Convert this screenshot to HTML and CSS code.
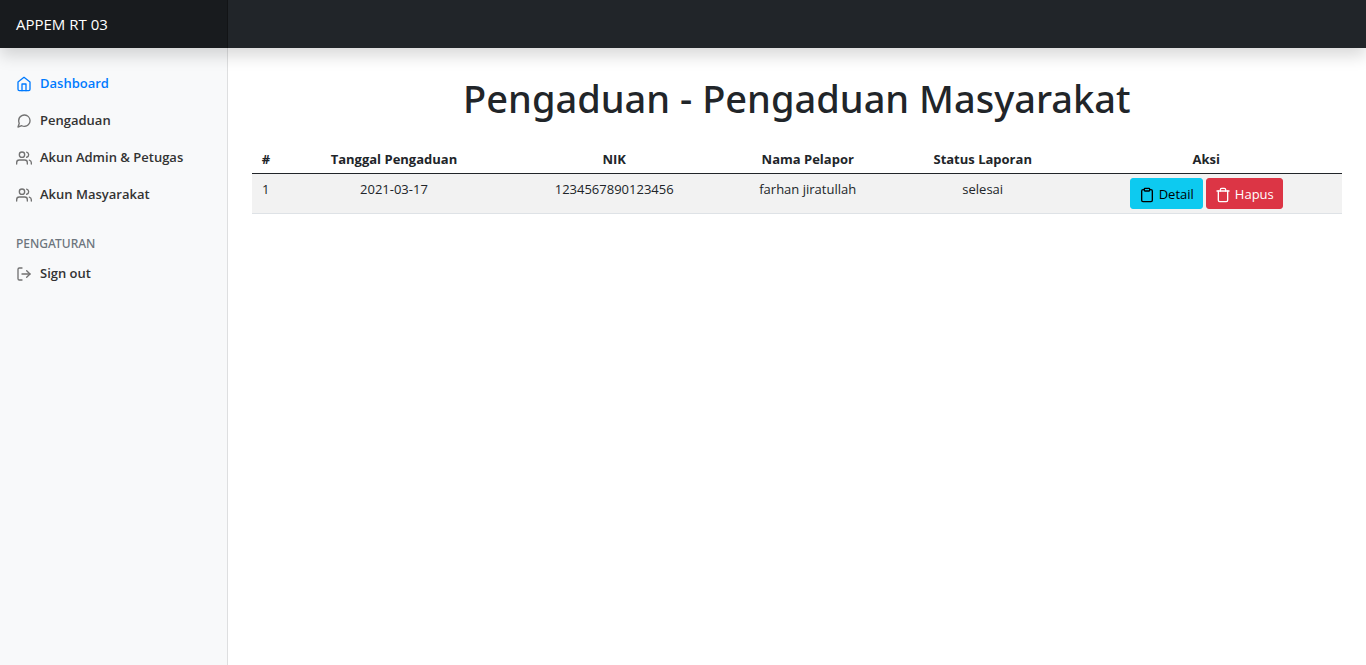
FILE: index.html
```html
<!DOCTYPE html>
<html lang="id">
<head>
<meta charset="utf-8">
<meta name="viewport" content="width=device-width, initial-scale=1">
<title>APPEM RT 03</title>
<link rel="stylesheet" href="styles.css">
</head>
<body>
<svg class="sprite" aria-hidden="true">
  <symbol id="home" viewBox="0 0 24 24"><path d="M3 9l9-7 9 7v11a2 2 0 0 1-2 2H5a2 2 0 0 1-2-2z"/><path d="M9 22V12h6v10"/></symbol>
  <symbol id="message" viewBox="0 0 24 24"><path d="M21 11.5a8.38 8.38 0 0 1-.9 3.8 8.5 8.5 0 0 1-7.6 4.7 8.38 8.38 0 0 1-3.8-.9L3 21l1.9-5.7a8.38 8.38 0 0 1-.9-3.8 8.5 8.5 0 0 1 4.7-7.6 8.38 8.38 0 0 1 3.8-.9h.5a8.48 8.48 0 0 1 8 8v.5z"/></symbol>
  <symbol id="users" viewBox="0 0 24 24"><path d="M17 21v-2a4 4 0 0 0-4-4H5a4 4 0 0 0-4 4v2"/><circle cx="9" cy="7" r="4"/><path d="M23 21v-2a4 4 0 0 0-3-3.87"/><path d="M16 3.13a4 4 0 0 1 0 7.75"/></symbol>
  <symbol id="logout" viewBox="0 0 24 24"><path d="M9 21H5a2 2 0 0 1-2-2V5a2 2 0 0 1 2-2h4"/><path d="M16 17l5-5-5-5"/><path d="M21 12H9"/></symbol>
  <symbol id="clipboard" viewBox="0 0 24 24"><path d="M16 4h2a2 2 0 0 1 2 2v14a2 2 0 0 1-2 2H6a2 2 0 0 1-2-2V6a2 2 0 0 1 2-2h2"/><rect x="8" y="2" width="8" height="4" rx="1" ry="1"/></symbol>
  <symbol id="trash" viewBox="0 0 24 24"><path d="M3 6h18"/><path d="M19 6v14a2 2 0 0 1-2 2H7a2 2 0 0 1-2-2V6m3 0V4a2 2 0 0 1 2-2h4a2 2 0 0 1 2 2v2"/></symbol>
</svg>
<header class="navbar">
  <a class="brand" href="#">APPEM RT 03</a>
</header>
<div class="layout">
  <nav class="sidebar">
    <ul class="nav">
      <li><a class="nav-link active" href="#"><svg class="icon"><use href="#home"/></svg>Dashboard</a></li>
      <li><a class="nav-link" href="#"><svg class="icon"><use href="#message"/></svg>Pengaduan</a></li>
      <li><a class="nav-link" href="#"><svg class="icon"><use href="#users"/></svg>Akun Admin &amp; Petugas</a></li>
      <li><a class="nav-link" href="#"><svg class="icon"><use href="#users"/></svg>Akun Masyarakat</a></li>
    </ul>
    <h6 class="nav-heading">Pengaturan</h6>
    <ul class="nav">
      <li><a class="nav-link" href="#"><svg class="icon"><use href="#logout"/></svg>Sign out</a></li>
    </ul>
  </nav>
  <main class="main">
    <h1 class="title">Pengaduan - Pengaduan Masyarakat</h1>
    <table class="table">
      <colgroup>
        <col class="col-no"><col class="col-date"><col class="col-nik"><col class="col-name"><col class="col-status"><col class="col-action">
      </colgroup>
      <thead>
        <tr><th scope="col">#</th><th scope="col">Tanggal Pengaduan</th><th scope="col">NIK</th><th scope="col">Nama Pelapor</th><th scope="col">Status Laporan</th><th scope="col">Aksi</th></tr>
      </thead>
      <tbody>
        <tr>
          <td>1</td><td>2021-03-17</td><td>1234567890123456</td><td>farhan jiratullah</td><td>selesai</td>
          <td class="action-cell"><div class="actions"><a class="btn btn-info" href="#"><svg class="icon"><use href="#clipboard"/></svg>Detail</a><a class="btn btn-danger" href="#"><svg class="icon"><use href="#trash"/></svg>Hapus</a></div></td>
        </tr>
      </tbody>
    </table>
  </main>
</div>
</body>
</html>
```
FILE: styles.css
```css
* { box-sizing: border-box; }

body {
  margin: 0;
  min-height: 100vh;
  display: flex;
  flex-direction: column;
  background: #fff;
  color: #212529;
  font: 400 13px/21px "Open Sans", "Noto Sans", sans-serif;
}

a { text-decoration: none; }
.sprite { display: none; }

.icon {
  width: 16px;
  height: 16px;
  flex: none;
  fill: none;
  stroke: currentColor;
  stroke-width: 2;
  stroke-linecap: round;
  stroke-linejoin: round;
}

.navbar {
  position: sticky;
  top: 0;
  z-index: 1;
  display: flex;
  background: #212529;
  box-shadow: 0 8px 16px rgba(0, 0, 0, .15);
}

.brand {
  width: 16.6667%;
  padding: 12px 16px;
  color: #fff;
  font-size: 15px;
  line-height: 24px;
  background: rgba(0, 0, 0, .25);
  box-shadow: inset -1px 0 0 rgba(0, 0, 0, .25);
}

.layout { flex: 1; display: flex; }

.sidebar {
  width: 16.6667%;
  flex: none;
  padding-top: 17px;
  background: #f8f9fa;
  box-shadow: inset -1px 0 0 rgba(0, 0, 0, .1);
}

.nav { list-style: none; margin: 0; padding: 0; }

.nav-link {
  display: flex;
  align-items: center;
  gap: 8px;
  padding: 8px 16px;
  color: #333;
  font-weight: 600;
  white-space: nowrap;
}
.nav-link .icon { color: #727272; }
.nav-link.active, .nav-link.active .icon { color: #007bff; }

.nav-heading {
  margin: 24px 0 4px;
  padding: 0 16px;
  color: #6c757d;
  font-family: "Noto Sans", "Open Sans", sans-serif;
  font-size: 12px;
  font-weight: 500;
  line-height: 14px;
  text-transform: uppercase;
}

.main { flex: 1; min-width: 0; padding: 26px 24px; }

.title {
  margin: 0 0 22px;
  font-family: "Noto Sans", "Open Sans", sans-serif;
  font-size: 38px;
  font-weight: 500;
  line-height: 48px;
  text-align: center;
}

.table {
  width: 100%;
  table-layout: fixed;
  border-collapse: collapse;
  text-align: center;
}
.table th, .table td { padding: 5px 4px 3px; vertical-align: top; }
.table th { font-weight: 700; border-bottom: 1px solid #212529; }
.table td { background: #f2f2f2; border-bottom: 1px solid #dee2e6; }
.table .action-cell { padding: 4px; }

.col-no { width: 2.6%; }
.col-date { width: 20.9%; }
.col-nik { width: 19.5%; }
.col-name { width: 16%; }
.col-status { width: 16.1%; }
.col-action { width: 24.9%; }

.actions { display: flex; justify-content: center; gap: 3px; }

.btn {
  display: flex;
  align-items: center;
  gap: 4px;
  padding: 5px 8px 3px;
  border: 1px solid;
  border-radius: 3px;
}
.btn-info { color: #000; background: #0dcaf0; border-color: #0dcaf0; }
.btn-danger { color: #fff; background: #dc3545; border-color: #dc3545; }
```
